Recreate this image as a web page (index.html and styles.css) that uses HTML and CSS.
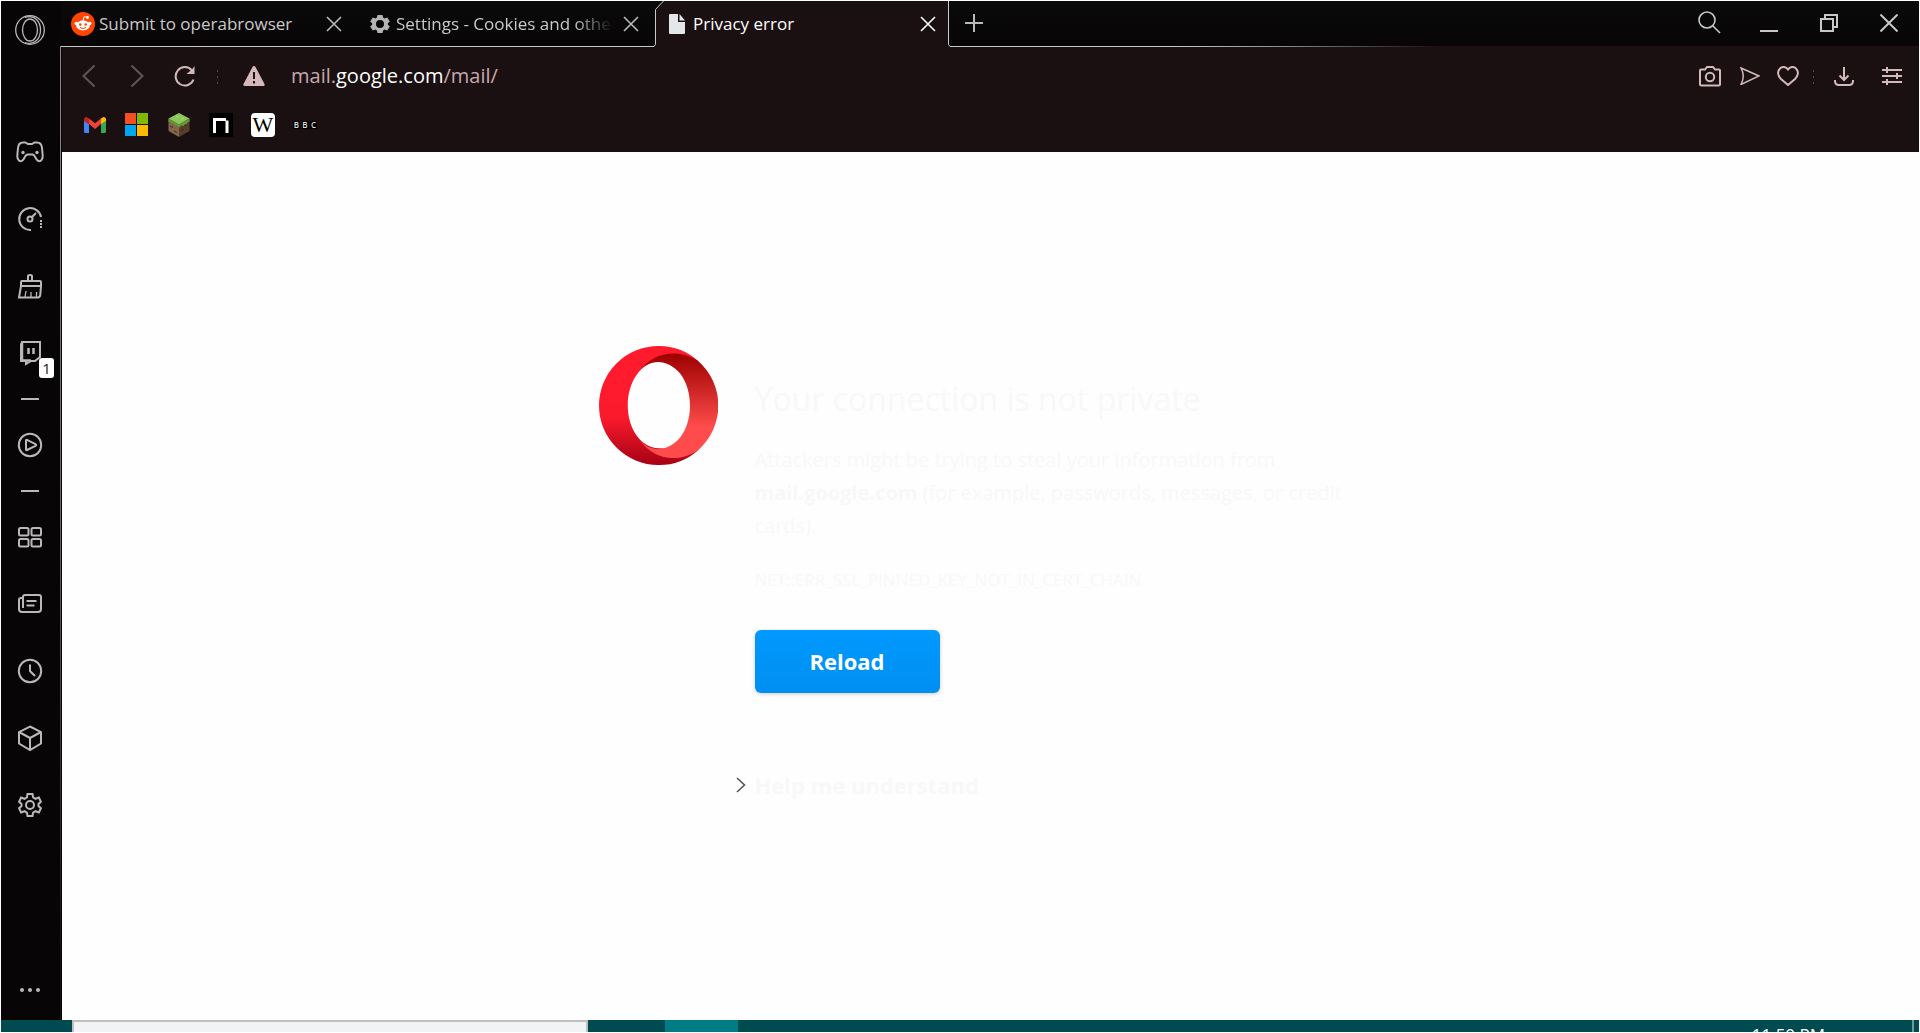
FILE: index.html
```html
<!DOCTYPE html>
<html lang="en">
<head>
<meta charset="utf-8">
<title>Privacy error</title>
<link rel="stylesheet" href="styles.css">
</head>
<body>
<div class="browser">
  <nav class="sidebar" aria-label="Sidebar">
    <button class="side-btn opera-menu" aria-label="Menu"><svg width="32" height="32" viewBox="0 0 32 32"><circle cx="16" cy="16" r="14.3"/><ellipse cx="16" cy="16" rx="7.500" ry="11"/><path d="M11 3.500C21 0 26.500 8 26.500 16S21 32 11 28.500"/></svg></button>
    <div class="side-group first">
      <button class="side-btn" aria-label="GX Corner"><svg width="30" height="24" viewBox="0 0 30 24"><path class="bold" d="M8 2.500h2.500L13 4h4l2.500-1.500H22c3.500 0 4.700 2 5 5.500l.7 7.500c.2 3-1.200 5.700-3.700 5.700-3.700 0-3.200-6.700-6.500-6.700h-5c-3.300 0-2.800 6.700-6.500 6.700-2.500 0-3.900-2.700-3.700-5.700L3 8c.3-3.500 1.500-5.500 5-5.500z"/><circle class="dot" cx="8" cy="12.500" r="1.700"/><circle class="dot" cx="22" cy="12.500" r="1.700"/></svg></button>
      <button class="side-btn" aria-label="GX Control"><svg width="26" height="26" viewBox="0 0 26 26"><path class="bold" d="M24 11A11 11 0 1 0 14 24M15 11l4-4"/><circle class="bold" cx="13" cy="13" r="2.500"/><path class="dash" d="M24 14v8"/></svg></button>
      <button class="side-btn" aria-label="GX Cleaner"><svg width="26" height="26" viewBox="0 0 26 26"><path class="bold" d="M11 7V3q0-1 2-1t2 1v4M5 8h18q1 0 1 1v4H4V9q0-1 1-1zM4 13L2 24.500h19q2 0 2.300-3L24 13"/><path d="M8 24l1-6M14 24v-5M19.500 24v-5"/></svg></button>
      <button class="side-btn" aria-label="Twitch, 1 notification"><svg width="24" height="26" viewBox="0 0 24 26"><path class="bold" d="M4 2h18v15l-5 4h-4l-5 3v-3H3V5z"/><path class="heavy" d="M4 3v17M10.500 8v6M15.500 8v6M4 20.500h9"/></svg><span class="badge">1</span></button>
    </div>
    <hr class="side-rule">
    <button class="side-btn" aria-label="Player"><svg width="26" height="26" viewBox="0 0 26 26"><circle class="bold" cx="13" cy="13" r="11.200"/><path class="bold" d="M9 8.500q0-1 1-.6l8.500 4.300q1.300.8 0 1.600L10 18q-1 .5-1-.6z"/></svg></button>
    <hr class="side-rule">
    <div class="side-group">
      <button class="side-btn" aria-label="Speed dial"><svg width="26" height="22" viewBox="0 0 26 22"><rect class="bold" x="2" y="2" width="9.500" height="7.500" rx="1.500"/><rect class="bold" x="14.500" y="2" width="9.500" height="7.500" rx="1.500"/><rect class="bold" x="2" y="13" width="9.500" height="7.500" rx="1.500"/><rect class="bold" x="14.500" y="13" width="9.500" height="7.500" rx="1.500"/></svg></button>
      <button class="side-btn" aria-label="News"><svg width="26" height="22" viewBox="0 0 26 22"><path class="bold" d="M6 15V4q0-2 2-2h14q2 0 2 2v12q0 3-3 3H5q-3 0-3-3V7q0-2 2-2h2M9.500 8h10M9.500 12.500h8"/></svg></button>
      <button class="side-btn" aria-label="History"><svg width="26" height="26" viewBox="0 0 26 26"><circle class="bold" cx="13" cy="13" r="11.200"/><path class="bold" d="M13 6.500V13l5 5"/></svg></button>
      <button class="side-btn" aria-label="Extensions"><svg width="26" height="28" viewBox="0 0 26 28"><path class="bold" d="M13 2.500l11 5.500v11.500L13 26 2 19.500V8zM2 8l11 6 11-6M13 14v12"/></svg></button>
      <button class="side-btn" aria-label="Settings"><svg width="26" height="26" viewBox="0 0 26 26"><path class="bold" d="M10.500 2h5l.6 3.400 2.400 1.400 3.400-1.300 2 4.200-2.400 2.300v2l2.400 2.300-2 4.200-3.400-1.300-2.400 1.400-.6 3.400h-5l-.6-3.400-2.400-1.400-3.400 1.300-2-4.200L4.500 14v-2L2.100 9.700l2-4.200 3.400 1.300 2.400-1.400z"/><circle class="bold" cx="13" cy="13" r="4"/></svg></button>
    </div>
    <button class="side-btn more" aria-label="More"><svg width="22" height="6" viewBox="0 0 22 6"><circle class="dot" cx="3" cy="3" r="2"/><circle class="dot" cx="11" cy="3" r="2"/><circle class="dot" cx="19" cy="3" r="2"/></svg></button>
  </nav>

  <div class="main">
    <header class="tabbar">
      <div class="tab">
        <svg class="tab-icon" width="24" height="24" viewBox="0 0 24 24"><circle cx="12" cy="12" r="12" fill="#ff4500"/><g fill="#fff"><ellipse cx="12" cy="13.500" rx="6.800" ry="5"/><circle cx="5.300" cy="11.500" r="1.800"/><circle cx="18.700" cy="11.500" r="1.800"/><circle cx="16.500" cy="5.500" r="1.400"/></g><path d="M12 9l1-4.300 3.500.8" fill="none" stroke="#fff"/><circle cx="9.300" cy="12.500" r="1.300" fill="#ff4500"/><circle cx="14.700" cy="12.500" r="1.300" fill="#ff4500"/><path d="M9 15.500q3 2 6 0" fill="none" stroke="#ff4500"/></svg>
        <span class="tab-title">Submit to operabrowser</span>
        <button class="tab-close" aria-label="Close tab"><svg width="16" height="16" viewBox="0 0 16 16"><path d="M1 1l14 14M15 1L1 15"/></svg></button>
      </div>
      <div class="tab">
        <svg class="tab-icon" width="24" height="24" viewBox="0 0 24 24"><path fill="#b4b4b4" fill-rule="evenodd" d="M9.500 3h5l.6 2.500 1.500.9 2.700-.9 2.500 4-1.900 1.700v1.600l1.900 1.700-2.500 4-2.700-.9-1.500.9-.6 2.500h-5l-.6-2.500-1.500-.9-2.700.9-2.500-4 1.900-1.700v-1.600L2.200 9.500l2.500-4 2.700.9 1.500-.9zM12 8a4 4 0 1 0 0 8 4 4 0 0 0 0-8z"/></svg>
        <span class="tab-title faded">Settings - Cookies and other site data</span>
        <button class="tab-close" aria-label="Close tab"><svg width="16" height="16" viewBox="0 0 16 16"><path d="M1 1l14 14M15 1L1 15"/></svg></button>
      </div>
      <div class="tab active">
        <svg class="edge left" width="12" height="46" viewBox="0 0 12 46"><path class="fill" d="M0 46l2.500-2V8.500L10 0h2v46z"/><path d="M0 45.500h1l1.500-2v-35L10.500 0"/></svg>
        <svg class="tab-icon" width="24" height="24" viewBox="0 0 24 24"><path fill="#e4e7ea" d="M5 2h8v8h7v11q0 1-1 1H5q-1 0-1-1V3q0-1 1-1z"/><path fill="#e4e7ea" d="M14.500 2v6.500H20z"/></svg>
        <span class="tab-title">Privacy error</span>
        <button class="tab-close" aria-label="Close tab"><svg width="16" height="16" viewBox="0 0 16 16"><path d="M1 1l14 14M15 1L1 15"/></svg></button>
        <svg class="edge right" width="4" height="46" viewBox="0 0 4 46"><path class="cover" d="M1 0h3v46H3l-2-2z"/><path d="M.5 0v43.500l1.500 2h2"/></svg>
      </div>
      <button class="new-tab" aria-label="New tab"><svg width="18" height="18" viewBox="0 0 18 18"><path d="M9 0v18M0 9h18"/></svg></button>
      <div class="window-controls">
        <button aria-label="Search tabs"><svg class="search" width="24" height="24" viewBox="0 0 24 24"><circle cx="10" cy="9" r="8"/><path d="M15.500 14.500L23 22"/></svg></button>
        <button aria-label="Minimize"><svg width="18" height="18" viewBox="0 0 18 18"><path d="M0 17h18"/></svg></button>
        <button aria-label="Restore"><svg width="18" height="18" viewBox="0 0 18 18"><path d="M1 5h12v12H1zM5 5V1h12v12h-4"/></svg></button>
        <button aria-label="Close"><svg width="18" height="18" viewBox="0 0 18 18"><path d="M.5.5l17 17M17.500.5l-17 17"/></svg></button>
      </div>
    </header>

    <div class="toolbar">
      <div class="address-row">
        <button class="tool dim" aria-label="Back"><svg width="14" height="24" viewBox="0 0 14 24"><path d="M12.500 1.500L1.500 12l11 10.500"/></svg></button>
        <button class="tool dim" aria-label="Forward"><svg width="14" height="24" viewBox="0 0 14 24"><path d="M1.500 1.500l11 10.500-11 10.500"/></svg></button>
        <button class="tool" aria-label="Reload page"><svg width="22" height="22" viewBox="0 0 22 22"><path d="M19.500 14.500A9.200 9.200 0 1 1 18 5.500"/><path class="solid" d="M20.500 1v8h-8l3-2.500 2.500-2z"/></svg></button>
        <span class="separator"></span>
        <button class="tool warning" aria-label="Not secure"><svg width="22" height="20" viewBox="0 0 22 20"><path class="solid" d="M11 0q1 0 1.500 1l9 17q.5 2-1 2h-19q-1.500 0-1-2l9-17q.5-1 1.500-1z"/><path class="mark" d="M11 6v7M11 15v2.500"/></svg></button>
        <a class="url" href="#"><span>mail.</span><span class="domain">google.com</span><span>/mail/</span></a>
        <div class="actions">
          <button class="tool a40" aria-label="Snapshot"><svg width="22" height="22" viewBox="0 0 22 22"><path d="M1 5.500q0-1 1-1h4L8 2h6l2 2.500h4q1 0 1 1V19q0 1.500-1.500 1.500h-17Q1 20.500 1 19z"/><circle cx="11" cy="12" r="4.200"/></svg></button>
          <button class="tool a40" aria-label="Send"><svg class="thin" width="20" height="18" viewBox="0 0 20 18"><path d="M1 1l18 8L1 17.500Q5.500 9 1 1z"/></svg></button>
          <button class="tool a36" aria-label="Bookmark"><svg width="22" height="20" viewBox="0 0 22 20"><path d="M11 3.500C9 .5 5.500.5 3.500 2-.5 5.500 1 10 4 13l7 6 7-6c3-3 4.500-7.500.5-11C16.500.5 13 .5 11 3.500z"/></svg></button>
          <span class="separator narrow"></span>
          <button class="tool" aria-label="Downloads"><svg width="20" height="20" viewBox="0 0 20 20"><path d="M10 1v13M5.500 9.500L10 14l4.500-4.500M1 14v1q0 4 4 4h10q4 0 4-4v-1"/></svg></button>
          <button class="tool" aria-label="Easy setup"><svg width="20" height="20" viewBox="0 0 20 20"><path d="M0 4h20M0 10h20M0 16h20M5 1v6M15 7v6M5 13v6"/></svg></button>
        </div>
      </div>
      <nav class="bookmarks" aria-label="Bookmarks">
        <a href="#" aria-label="Gmail"><svg width="24" height="24" viewBox="0 0 24 24"><path fill="#4285f4" d="M1 7l5 4v9H2.500Q1 20 1 18.500z"/><path fill="#34a853" d="M23 7l-5 4v9h3.500q1.500 0 1.500-1.500z"/><path fill="#ea4335" d="M6 5.500l6 4.700 6-4.700V11l-6 5-6-5z"/><path fill="#c5221f" d="M1 6.500Q1 4 3.500 4L6 5.500V11L1 8z"/><path fill="#fbbc04" d="M23 6.500Q23 4 20.500 4L18 5.500V11l5-3z"/></svg></a>
        <a href="#" aria-label="Microsoft"><svg width="24" height="24" viewBox="0 0 24 24"><path fill="#f25022" d="M0 0h11v11H0z"/><path fill="#7fba00" d="M12 0h11v11H12z"/><path fill="#00a4ef" d="M0 12h11v11H0z"/><path fill="#ffb900" d="M12 12h11v11H12z"/></svg></a>
        <a href="#" aria-label="Minecraft"><svg width="24" height="24" viewBox="0 0 24 24"><path fill="#84654a" d="M1.500 6L12 11v13L1.500 18z"/><path fill="#593d29" d="M22.500 6L12 11v13l10.500-6z"/><path fill="#8fc65a" d="M12 0l10.500 5.500L12 11.500 1.500 5.500z"/><path fill="#5f9a38" d="M1.500 5.500L12 11.500l10.500-6V9L20 9.500V11l-3 .5V13l-3-.5-2 2.500-2-2.500-2 .5v-2l-3-.5V9L1.500 8.500z"/><path stroke="#3d2a1c" fill="none" d="M3 13l3 1.500M7 18l3 1.500M14 18l3-2M18 13l3-1.500"/><path stroke="#acd97a" fill="none" d="M9 3l3 1.500M14 6l3-1"/></svg></a>
        <a href="#" aria-label="NFT"><svg width="24" height="24" viewBox="0 0 24 24"><path fill="#000" d="M0 0h24v24H0z"/><path fill="none" stroke="#fff" stroke-width="3" d="M5.500 20V6.500H17"/><path fill="none" stroke="#fff" stroke-width="3" d="M18 7.500V20"/></svg></a>
        <a href="#" class="wiki" aria-label="Wikipedia">W</a>
        <a href="#" class="bbc" aria-label="BBC"><span>B</span><span>B</span><span>C</span></a>
      </nav>
    </div>

    <main class="page">
      <div class="notice">
        <svg class="logo" width="119" height="119" viewBox="0 0 120 120" role="img" aria-label="Opera">
          <defs>
            <linearGradient id="ring" x1="0" y1="0" x2="0" y2="1"><stop offset=".3" stop-color="#ff1b2d"/><stop offset=".6" stop-color="#fa1a2c"/><stop offset="1" stop-color="#a70014"/></linearGradient>
            <linearGradient id="inner" x1="0" y1="0" x2="0" y2="1"><stop offset="0" stop-color="#9c0000"/><stop offset=".7" stop-color="#ff4b4b"/></linearGradient>
          </defs>
          <path fill="url(#ring)" d="M60 0a60 60 0 1 0 0 120 60 60 0 0 0 40-15L60 103C43 103 29 84 29 60s14-44 31-44l40-1A60 60 0 0 0 60 0z"/>
          <path fill="url(#inner)" d="M40 26C54 6 80 2 100 15a60 60 0 0 1 0 90C80 118 56 116 40 93.500 51 108 70 107 82 92c13-16 13-47 0-64C70 13 51 12 40 26z"/>
        </svg>
        <div class="message">
          <h1>Your connection is not private</h1>
          <p class="lead">Attackers might be trying to steal your information from <strong>mail.google.com</strong> (for example, passwords, messages, or credit cards).</p>
          <p class="code">NET::ERR_SSL_PINNED_KEY_NOT_IN_CERT_CHAIN</p>
          <button class="reload">Reload</button>
          <button class="help"><svg width="10" height="16" viewBox="0 0 10 16"><path d="M1 1l7.500 7L1 15"/></svg>Help me understand</button>
        </div>
      </div>
    </main>
  </div>
</div>

<footer class="taskbar">
  <div class="task-search"></div>
  <div class="task-app"></div>
  <time class="clock">11:50 PM</time>
  <div class="show-desktop"></div>
</footer>
</body>
</html>
```
FILE: styles.css
```css
* { box-sizing: border-box; }

body {
  margin: 0;
  height: 100vh;
  padding: 1px;
  display: flex;
  flex-direction: column;
  background: #fff;
  font-family: "Open Sans", "Noto Sans", sans-serif;
  overflow: hidden;
}

button {
  margin: 0;
  padding: 0;
  border: 0;
  background: none;
  color: inherit;
  font: inherit;
  cursor: pointer;
}

a { color: inherit; text-decoration: none; }

svg { display: block; fill: none; flex: none; }

.browser {
  flex: 1;
  min-height: 0;
  display: flex;
  background: #070506;
}

/* Sidebar */
.sidebar {
  width: 61px;
  flex: none;
  display: flex;
  flex-direction: column;
  padding-right: 3px;
  background: linear-gradient(#8c8c8c, #6a6a6a 45%, #151112 90%) 59px 45px / 1px 100% no-repeat #070506;
}

.side-btn {
  position: relative;
  height: 67px;
  width: 100%;
  display: flex;
  align-items: center;
  justify-content: center;
  color: #b9b9b9;
}

.side-btn svg { stroke: currentColor; stroke-width: 1.300; }
.side-btn .bold { stroke-width: 2; }
.side-btn .heavy { stroke-width: 2.500; }
.side-btn .dot { fill: currentColor; stroke: none; }
.side-btn .dash { stroke-width: 2; stroke-dasharray: 2 1; }
.side-btn.opera-menu { height: 58px; }
.side-btn.more { height: 60px; margin-top: auto; }
.side-group.first { margin-top: 59px; }

.side-rule {
  width: 18px;
  height: 2px;
  margin: 12px auto 11px;
  border: 0;
  background: #b9b9b9;
}

.badge {
  position: absolute;
  left: 38px;
  top: 39px;
  width: 15px;
  height: 20px;
  border-radius: 3px;
  background: #fff;
  color: #222;
  font-size: 15px;
  line-height: 20px;
  text-align: center;
}

.main {
  flex: 1;
  min-width: 0;
  display: flex;
  flex-direction: column;
}

/* Tabs */
.tabbar {
  height: 46px;
  display: flex;
  margin-left: -1px;
  background:
    linear-gradient(90deg, #c8c8c8 60%, #8a8a8a 66%, #1a1011 74%) 0 100% / 100% 1px no-repeat,
    linear-gradient(#0b0a0b, #070506);
}

.tab {
  position: relative;
  width: 297px;
  display: flex;
  align-items: center;
  padding: 0 16px 0 10px;
  color: #c9c9c9;
  font-size: 17px;
}

.tab-icon { margin-right: 4px; }

.tab-title {
  flex: 1;
  padding-bottom: 2px;
  white-space: nowrap;
  overflow: hidden;
}

.tab-title.faded {
  margin-right: 10px;
  mask-image: linear-gradient(90deg, #000 82%, transparent);
}

.tab-close, .new-tab, .window-controls button {
  display: flex;
  align-items: center;
  justify-content: center;
}

.tab-close svg, .new-tab svg { stroke: #b9b9b9; stroke-width: 1.600; }

.tab.active {
  background: #1a1011;
  color: #fff;
}

.tab.active .tab-close svg { stroke: #fff; }
.edge { position: absolute; top: 0; stroke: #c8c8c8; }
.edge.left { left: -2px; background: #0a0909; }
.edge.right { right: 0; background: #1a1011; }
.edge .fill { fill: #1a1011; stroke: none; }
.edge .cover { fill: #0a0909; stroke: none; }

.new-tab { width: 44px; padding-bottom: 2px; }
.new-tab svg { stroke-width: 2; }

.window-controls {
  margin-left: auto;
  display: flex;
}

.window-controls button { width: 60px; padding-bottom: 2px; }
.window-controls svg { stroke: #c8c8c8; stroke-width: 2; }
.window-controls .search { stroke-width: 1.600; }

/* Address bar and bookmarks */
.toolbar {
  background: #1a1011;
  padding: 0 3px;
}

.address-row {
  height: 58px;
  display: flex;
  align-items: center;
}

.tool {
  width: 48px;
  height: 40px;
  padding-bottom: 1px;
  display: flex;
  align-items: center;
  justify-content: center;
  color: #d4b8bc;
}

.tool.dim { color: #65535a; }
.tool svg { stroke: currentColor; stroke-width: 2; }
.tool .solid { fill: currentColor; stroke: none; }
.tool .mark { stroke: #1a1011; }
.tool .thin { stroke-width: 1.500; }
.tool.a40 { width: 40px; }
.tool.a36 { width: 36px; }

.separator {
  width: 16px;
  height: 16px;
  background: radial-gradient(circle, #54464a 1px, transparent 1px) 50% 0 / 3px 6px repeat-y;
}

.separator.narrow { width: 14px; }

.warning { margin-left: 5px; }

.url {
  margin-left: 13px;
  padding-bottom: 2px;
  font-size: 20px;
  color: #c8a8ae;
}

.url .domain { color: #fff; }

.actions {
  margin-left: auto;
  display: flex;
  align-items: center;
}

.bookmarks {
  height: 47px;
  padding: 8px 0 0 18px;
  display: flex;
  gap: 18px;
}

.bookmarks a {
  width: 24px;
  height: 24px;
}

.bookmarks .wiki {
  border-radius: 4px;
  background: #fff;
  color: #000;
  font: 22px/24px "Liberation Serif", serif;
  display: flex;
  justify-content: center;
}

.bookmarks .bbc {
  display: flex;
  align-items: center;
  justify-content: space-between;
  color: #ddd;
  font-size: 8px;
  font-weight: 600;
}

.bookmarks .bbc span {
  width: 7px;
  line-height: 8px;
  text-align: center;
  background: #000;
}

/* Error page */
.page {
  flex: 1;
  background: #fefefe;
  color: #f8f8f8;
}

.notice {
  width: 784px;
  max-width: 100%;
  margin: 194px auto 0;
  display: flex;
  gap: 37px;
}

.message {
  width: 600px;
  padding-top: 29px;
}

h1 {
  margin: 0;
  font-size: 32px;
  line-height: 48px;
  font-weight: 400;
}

.lead {
  margin: 20px 0 0;
  font-size: 20px;
  line-height: 33px;
}

.code {
  margin: 24px 0 0;
  font-size: 17px;
  line-height: 28px;
}

.reload {
  display: block;
  width: 185px;
  height: 63px;
  margin-top: 36px;
  padding-bottom: 2px;
  border-radius: 6px;
  background: linear-gradient(#0099ff, #008ff0);
  box-shadow: 0 1px 4px rgba(0, 0, 0, .2);
  color: #fff;
  font-size: 22px;
  font-weight: 700;
}

.help {
  display: flex;
  align-items: center;
  gap: 9px;
  margin: 76px 0 0 -19px;
  font-size: 22px;
  line-height: 32px;
  font-weight: 700;
}

.help svg { stroke: #555; stroke-width: 1.600; }

/* Desktop taskbar */
.taskbar {
  height: 12px;
  flex: none;
  display: flex;
  overflow: hidden;
  padding-left: 71px;
  background: #004b4f;
}

.task-search {
  width: 516px;
  border: 2px solid #c0c0c0;
  border-bottom: 0;
  background: #f0f4f5;
}

.task-app {
  width: 73px;
  margin-left: 77px;
  background: #007d84;
}

.clock {
  margin: 5px 87px 0 auto;
  color: #fff;
  font-size: 17px;
  line-height: 20px;
}

.show-desktop {
  width: 7px;
  border-left: 2px solid #6f9a9c;
}
```
